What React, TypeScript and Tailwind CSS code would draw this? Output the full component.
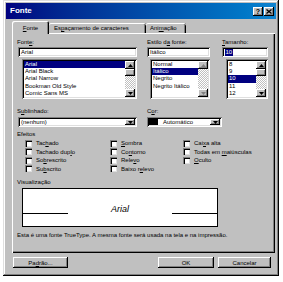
import React from "react";

const raised =
  "bg-[#c0c0c0] shadow-[inset_-1px_-1px_0_#000,inset_1px_1px_0_#fff,inset_-2px_-2px_0_#808080]";
const sunken =
  "bg-white shadow-[inset_1px_1px_0_#808080,inset_-1px_-1px_0_#fff,inset_2px_2px_0_#000,inset_-2px_-2px_0_#dfdfdf]";
const dither =
  "bg-[repeating-conic-gradient(#ffffff_0_25%,#c0c0c0_0_50%)] bg-[length:2px_2px]";

function Arrow({ dir, disabled }: { dir: "up" | "down"; disabled?: boolean }) {
  return (
    <svg width="5" height="3" viewBox="0 0 5 3">
      <polygon
        points={dir === "up" ? "2.5,0 5,3 0,3" : "0,0 5,0 2.5,3"}
        fill={disabled ? "#808080" : "#000"}
      />
    </svg>
  );
}

function SBtn({ dir, disabled }: { dir: "up" | "down"; disabled?: boolean }) {
  return (
    <div className={`${raised} h-[8px] w-full flex items-center justify-center shrink-0`}>
      <Arrow dir={dir} disabled={disabled} />
    </div>
  );
}

function Scrollbar({ disabled }: { disabled?: boolean }) {
  return (
    <div className="w-[10px] h-full flex flex-col shrink-0">
      <SBtn dir="up" disabled={disabled} />
      {disabled ? (
        <div className={`flex-1 ${dither}`} />
      ) : (
        <>
          <div className={`${raised} h-[7px] shrink-0`} />
          <div className={`flex-1 ${dither}`} />
        </>
      )}
      <SBtn dir="down" disabled={disabled} />
    </div>
  );
}

function ListBox({
  items,
  selected,
  disabledScroll,
  className,
}: {
  items: string[];
  selected: number;
  disabledScroll?: boolean;
  className: string;
}) {
  return (
    <div className={`${sunken} p-[2px] flex ${className}`}>
      <div className="flex-1 flex flex-col overflow-hidden">
        {items.map((it, i) => (
          <div
            key={it}
            className={`h-[7.2px] leading-[7.2px] pl-[1px] whitespace-nowrap ${
              i === selected ? "bg-[#000080] text-white" : "text-black"
            }`}
          >
            {it}
          </div>
        ))}
      </div>
      <Scrollbar disabled={disabledScroll} />
    </div>
  );
}

function DropBtn() {
  return (
    <div className={`${raised} w-[10px] h-full flex items-center justify-center shrink-0`}>
      <Arrow dir="down" />
    </div>
  );
}

function Check({ children }: { children: React.ReactNode }) {
  return (
    <div className="h-[8.5px] flex items-center gap-[4px] whitespace-nowrap">
      <div className="w-[7px] h-[7px] bg-white shadow-[inset_1px_1px_0_#808080,inset_2px_2px_0_#000,inset_-1px_-1px_0_#dfdfdf] shrink-0" />
      <span className="leading-[8px]">{children}</span>
    </div>
  );
}

function Btn({ className, children }: { className: string; children: React.ReactNode }) {
  return (
    <div className={`${raised} h-[11px] flex items-center justify-center leading-none ${className}`}>
      {children}
    </div>
  );
}

export default function App() {
  return (
    <div className="w-[283px] h-[282px] bg-white pl-[3px] overflow-hidden font-['Liberation_Sans',Arial,sans-serif] text-[6px] text-black">
      <div className="w-[276px] h-[276px] bg-[#c0c0c0] p-[3px] flex flex-col shadow-[inset_-1px_-1px_0_#000,inset_1px_1px_0_#dfdfdf,inset_-2px_-2px_0_#808080,inset_2px_2px_0_#fff]">
        {/* Title bar */}
        <div className="h-[16px] flex items-center bg-gradient-to-r from-[#000080] to-[#1084d0] pl-[4px] pr-[2px] shrink-0">
          <span className="text-white font-bold text-[8px] leading-none">Fonte</span>
          <div className="ml-auto flex gap-[1px]">
            <div className={`${raised} w-[10px] h-[9px] flex items-center justify-center font-bold text-[7px] leading-none`}>
              ?
            </div>
            <div className={`${raised} w-[10px] h-[9px] flex items-center justify-center`}>
              <svg width="6" height="5" viewBox="0 0 6 5">
                <path d="M0.5 0.5 L5.5 4.5 M5.5 0.5 L0.5 4.5" stroke="#000" strokeWidth="1.3" />
              </svg>
            </div>
          </div>
        </div>

        {/* Tabs */}
        <div className="mt-[2px] pl-[6px] flex items-end shrink-0">
          <div className="relative z-10 -mb-[1px] h-[13px] w-[37px] bg-[#c0c0c0] rounded-t-[2px] shadow-[inset_1px_1px_0_#fff,inset_-1px_0_0_#000,inset_-2px_0_0_#808080] flex items-center justify-center leading-none">
            <span><u>F</u>onte</span>
          </div>
          <div className="h-[10px] w-[97px] rounded-t-[2px] shadow-[inset_0_1px_0_#fff,inset_-1px_0_0_#000,inset_-2px_0_0_#808080] flex items-center pl-[5px] leading-none whitespace-nowrap">
            <span>Es<u>p</u>açamento de caracteres</span>
          </div>
          <div className="h-[10px] w-[40px] rounded-t-[2px] shadow-[inset_0_1px_0_#fff,inset_-1px_0_0_#000,inset_-2px_0_0_#808080] flex items-center pl-[4px] leading-none whitespace-nowrap">
            <span>Ani<u>m</u>ação</span>
          </div>
        </div>

        {/* Panel */}
        <div className="ml-[6px] w-[263px] h-[220px] shrink-0 pt-[5px] flex flex-col shadow-[inset_1px_1px_0_#fff,inset_-1px_-1px_0_#000,inset_-2px_-2px_0_#808080]">
          {/* Row: font / style / size */}
          <div className="flex pl-[6px]">
            <div className="w-[119px] flex flex-col">
              <div className="h-[8px] leading-[8px] -ml-[1px]">
                Font<u>e</u>:
              </div>
              <div className={`${sunken} mt-[1px] h-[10px] leading-[10px] pl-[3px]`}>Arial</div>
              <ListBox
                className="mt-[2px] ml-[4px] h-[40px]"
                items={["Arial", "Arial Black", "Arial Narrow", "Bookman Old Style", "Comic Sans MS"]}
                selected={0}
              />
            </div>
            <div className="ml-[10px] w-[63px] flex flex-col">
              <div className="h-[8px] leading-[8px] whitespace-nowrap">
                Estilo d<u>a</u> fonte:
              </div>
              <div className={`${sunken} mt-[1px] h-[10px] leading-[10px] pl-[3px]`}>Itálico</div>
              <ListBox
                className="mt-[2px] ml-[3px] h-[40px]"
                items={["Normal", "Itálico", "Negrito", "Negrito Itálico"]}
                selected={1}
                disabledScroll
              />
            </div>
            <div className="ml-[12px] w-[46px] flex flex-col">
              <div className="h-[8px] leading-[8px]">
                <u>T</u>amanho:
              </div>
              <div className={`${sunken} mt-[1px] h-[10px] pl-[3px] flex items-center`}>
                <span className="bg-[#000080] text-white leading-[7px] px-[0.5px]">10</span>
              </div>
              <ListBox
                className="mt-[2px] ml-[4px] h-[40px]"
                items={["8", "9", "10", "11", "12"]}
                selected={2}
              />
            </div>
          </div>

          {/* Row: underline / color */}
          <div className="flex pl-[6px] mt-[8px]">
            <div className="w-[119px] flex flex-col">
              <div className="h-[8px] leading-[8px] -ml-[1px]">
                S<u>u</u>blinhado:
              </div>
              <div className={`${sunken} mt-[2px] h-[10px] p-[2px] flex`}>
                <div className="flex-1 leading-[6px] pl-[1px]">(nenhum)</div>
                <DropBtn />
              </div>
            </div>
            <div className="ml-[10px] w-[75px] flex flex-col">
              <div className="h-[8px] leading-[8px]">
                C<u>o</u>r:
              </div>
              <div className={`${sunken} mt-[2px] h-[10px] p-[2px] flex items-center`}>
                <div className="w-[9px] h-[6px] bg-black ml-[0px] shrink-0" />
                <div className="flex-1 leading-[6px] pl-[5px]">Automático</div>
                <DropBtn />
              </div>
            </div>
          </div>

          {/* Effects */}
          <div className="mt-[3px] pl-[5px] h-[8px] leading-[8px]">Efeitos</div>
          <div className="mt-[1px] pl-[13px] flex">
            <div className="w-[85px] flex flex-col">
              <Check>
                Tac<u>h</u>ado
              </Check>
              <Check>
                Tachado dup<u>l</u>o
              </Check>
              <Check>
                So<u>b</u>rescrito
              </Check>
              <Check>
                Su<u>b</u>scrito
              </Check>
            </div>
            <div className="w-[73px] flex flex-col">
              <Check>
                <u>S</u>ombra
              </Check>
              <Check>
                Co<u>n</u>torno
              </Check>
              <Check>
                Rele<u>v</u>o
              </Check>
              <Check>
                Baixo r<u>e</u>levo
              </Check>
            </div>
            <div className="flex flex-col">
              <Check>
                Cai<u>x</u>a alta
              </Check>
              <Check>
                Todas em <u>m</u>aiúsculas
              </Check>
              <Check>
                <u>O</u>culto
              </Check>
            </div>
          </div>

          {/* Preview */}
          <div className="mt-[5px] pl-[5px] h-[8px] leading-[8px]">Visualização</div>
          <div className="mt-[2px] ml-[10px] w-[196px] h-[39px] bg-white border border-black">
            <div className="flex items-end h-[25px]">
              <div className="w-[45px] border-b border-black" />
              <div className="flex-1 text-center italic text-[9px] leading-none">Arial</div>
              <div className="w-[45px] border-b border-black" />
            </div>
          </div>
          <div className="mt-[4px] pl-[5px] h-[8px] leading-[8px] whitespace-nowrap">
            Esta é uma fonte TrueType. A mesma fonte será usada na tela e na impressão.
          </div>
        </div>

        {/* Buttons */}
        <div className="mt-[4px] pl-[7px] pr-[5px] flex shrink-0">
          <Btn className="w-[55px]">
            Pa<u>d</u>rão...
          </Btn>
          <Btn className="ml-auto w-[56px]">OK</Btn>
          <Btn className="ml-[4px] w-[53px]">Cancelar</Btn>
        </div>
      </div>
    </div>
  );
}
